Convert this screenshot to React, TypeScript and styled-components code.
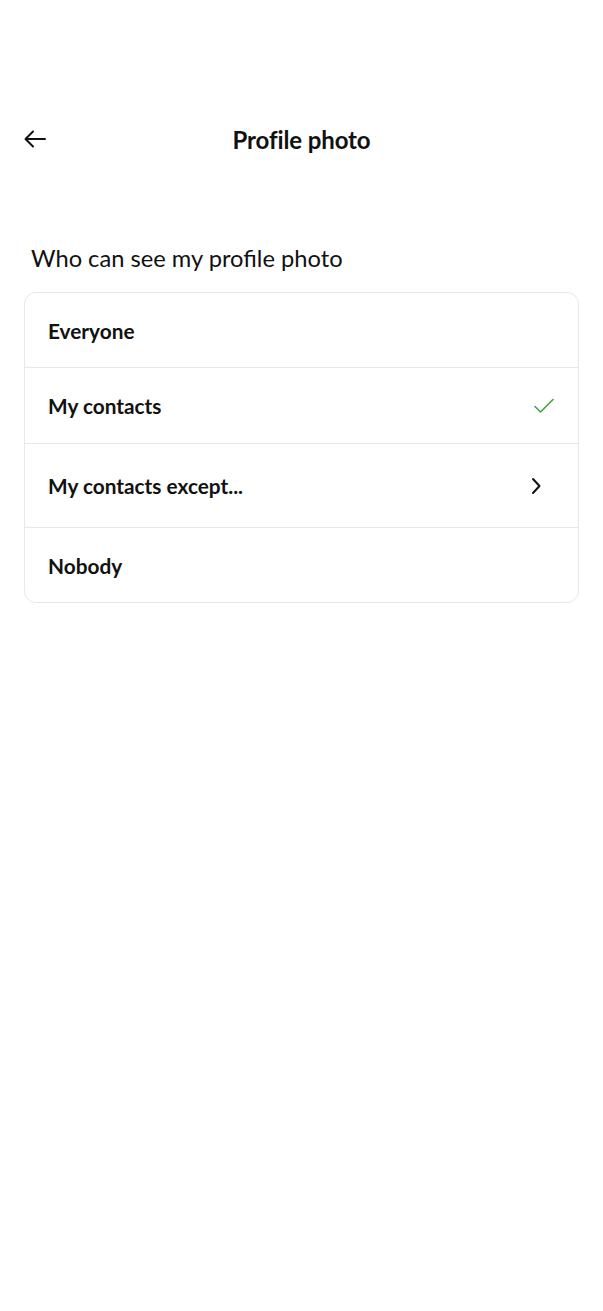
import React from "react";
import styled, { createGlobalStyle } from "styled-components";

const Global = createGlobalStyle`
  html, body { margin: 0; padding: 0; background: #ffffff; }
  body { font-family: "Lato", "Noto Sans", sans-serif; color: #111111; }
`;

const Page = styled.div`
  width: 603px;
  min-height: 1311px;
  background: #ffffff;
  display: flex;
  flex-direction: column;
`;

const TopBar = styled.header`
  height: 56px;
  margin-top: 111px;
  display: flex;
  align-items: center;
  position: relative;
  padding: 0 24px;
`;

const BackButton = styled.button`
  border: none;
  background: none;
  padding: 0;
  width: 22px;
  height: 22px;
  display: flex;
  align-items: center;
  justify-content: center;
  color: #111;
  cursor: pointer;
`;

const Title = styled.h1`
  position: absolute;
  left: 0;
  right: 0;
  text-align: center;
  margin: 0;
  font-size: 24px;
  font-weight: 700;
  letter-spacing: -0.1px;
  pointer-events: none;
`;

const Section = styled.section`
  padding: 0 24px;
  margin-top: 76px;
  display: flex;
  flex-direction: column;
`;

const SectionLabel = styled.h2`
  margin: 0 0 19px 7px;
  font-size: 23.7px;
  font-weight: 400;
  line-height: 30px;
`;

const Card = styled.div`
  border: 1px solid #e8e8e8;
  border-radius: 12px;
  overflow: hidden;
`;

const Row = styled.div<{ $h: number; $last?: boolean }>`
  height: ${(p) => p.$h}px;
  display: flex;
  align-items: center;
  justify-content: space-between;
  padding: 0 24px 0 23px;
  border-bottom: ${(p) => (p.$last ? "none" : "1px solid #e8e8e8")};
  box-sizing: border-box;
`;

const RowLabel = styled.span`
  font-size: 20.8px;
  font-weight: 700;
  color: #111;
`;

const Check = () => (
  <svg width="20" height="16" viewBox="0 0 20 16" fill="none">
    <path d="M1 8.5 L6.5 14 L19 1.5" stroke="#3aa845" strokeWidth="1.6" strokeLinecap="round" strokeLinejoin="round" />
  </svg>
);

const Chevron = () => (
  <svg width="12" height="18" viewBox="0 0 12 18" fill="none" style={{ marginRight: 12 }}>
    <path d="M3 2 L9.5 9 L3 16" stroke="#111" strokeWidth="2" strokeLinecap="round" strokeLinejoin="round" />
  </svg>
);

const Arrow = () => (
  <svg width="22" height="18" viewBox="0 0 22 18" fill="none">
    <path d="M21 9 H2 M9 1.5 L1.5 9 L9 16.5" stroke="#111" strokeWidth="2" strokeLinecap="round" strokeLinejoin="round" />
  </svg>
);

export default function App() {
  return (
    <Page>
      <Global />
      <TopBar>
        <BackButton aria-label="Back">
          <Arrow />
        </BackButton>
        <Title>Profile photo</Title>
      </TopBar>
      <Section>
        <SectionLabel>Who can see my profile photo</SectionLabel>
        <Card>
          <Row $h={75}>
            <RowLabel>Everyone</RowLabel>
          </Row>
          <Row $h={76}>
            <RowLabel>My contacts</RowLabel>
            <Check />
          </Row>
          <Row $h={84}>
            <RowLabel>My contacts except...</RowLabel>
            <Chevron />
          </Row>
          <Row $h={74} $last>
            <RowLabel>Nobody</RowLabel>
          </Row>
        </Card>
      </Section>
    </Page>
  );
}
